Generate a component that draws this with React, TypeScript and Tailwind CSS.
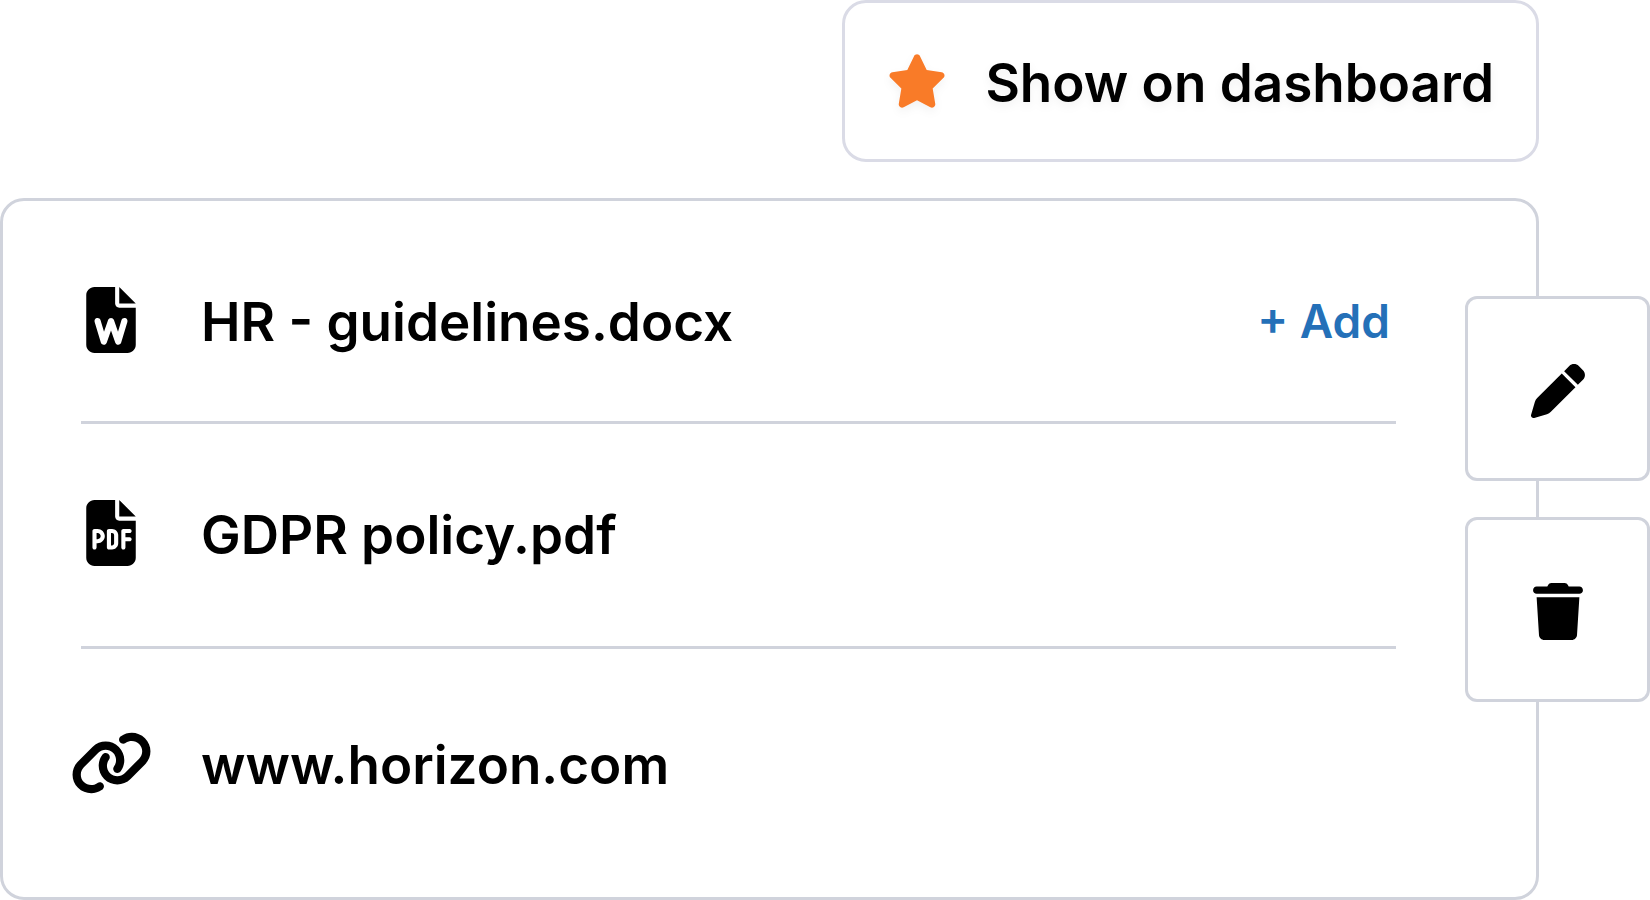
import type { ReactNode } from "react";
import { FaFileWord, FaLink, FaPen, FaStar, FaTrash } from "react-icons/fa6";

function FilePdfIcon({ className }: { className?: string }) {
  return (
    <svg className={className} viewBox="0 0 384 512" fill="currentColor" aria-hidden="true">
      <path d="M88 304H80V256H88C101.3 256 112 266.7 112 280C112 293.3 101.3 304 88 304zM192 256H200C208.8 256 216 263.2 216 272V336C216 344.8 208.8 352 200 352H192V256zM224 0V128C224 145.7 238.3 160 256 160H384V448C384 483.3 355.3 512 320 512H64C28.65 512 0 483.3 0 448V64C0 28.65 28.65 0 64 0H224zM64 224C55.16 224 48 231.2 48 240V368C48 376.8 55.16 384 64 384C72.84 384 80 376.8 80 368V336H88C118.9 336 144 310.9 144 280C144 249.1 118.9 224 88 224H64zM160 368C160 376.8 167.2 384 176 384H200C226.5 384 248 362.5 248 336V272C248 245.5 226.5 224 200 224H176C167.2 224 160 231.2 160 240V368zM288 224C279.2 224 272 231.2 272 240V368C272 376.8 279.2 384 288 384C296.8 384 304 376.8 304 368V320H336C344.8 320 352 312.8 352 304C352 295.2 344.8 288 336 288H304V256H336C344.8 256 352 248.8 352 240C352 231.2 344.8 224 336 224H288zM256 0L384 128H256V0z" />
    </svg>
  );
}

interface ResourceProps {
  icon: ReactNode;
  label: string;
  className: string;
  children?: ReactNode;
}

function Resource({ icon, label, className, children }: ResourceProps) {
  return (
    <li className={`flex items-center justify-between border-[#d0d3dc] ${className}`}>
      <a href="#" className="flex items-center gap-[60px]">
        <span className="flex w-[60px] justify-center">{icon}</span>
        <span className="pt-1 text-[53px] leading-[64px]">{label}</span>
      </a>
      {children}
    </li>
  );
}

function ActionButton({ label, children }: { label: string; children: ReactNode }) {
  return (
    <button
      type="button"
      aria-label={label}
      className="flex size-[185px] items-center justify-center rounded-xl border-3 border-[#d0d3dc] bg-white pt-1"
    >
      {children}
    </button>
  );
}

export default function App() {
  return (
    <main className="flex min-h-screen flex-col gap-9 bg-white font-['Inter',sans-serif] font-semibold text-black">
      <button
        type="button"
        className="mr-[111px] flex h-[162px] items-center gap-[38px] self-end rounded-3xl border-3 border-[#dadbe6] bg-white px-[42px] text-[53px] leading-[64px]"
      >
        <FaStar
          className="h-[54px] w-[60px] text-[#f97b28] drop-shadow-[0_4px_4px_rgba(0,0,0,0.05)]"
          aria-hidden="true"
        />
        <span className="pt-1 drop-shadow-[0_4px_4px_rgba(0,0,0,0.05)]">Show on dashboard</span>
      </button>

      <section className="relative flex flex-1 flex-col pr-[111px]">
        <ul className="flex-1 rounded-3xl border-3 border-[#d0d3dc] pt-[18px] pr-[140px] pl-[78px]">
          <Resource
            icon={<FaFileWord className="h-[66px] w-[50px] shrink-0" aria-hidden="true" />}
            label="HR - guidelines.docx"
            className="h-[205px] border-b-3"
          >
            <button type="button" className="pt-0.5 pr-1.5 text-[46px] leading-[64px] text-[#2470b8]">
              + Add
            </button>
          </Resource>
          <Resource
            icon={<FilePdfIcon className="h-[66px] w-[50px] shrink-0" />}
            label="GDPR policy.pdf"
            className="h-[225px] border-b-3 pb-1"
          />
          <Resource
            icon={<FaLink className="h-[66px] w-[83px] shrink-0" aria-hidden="true" />}
            label="www.horizon.com"
            className="h-[228px]"
          />
        </ul>

        <div className="absolute top-[98px] right-0 flex flex-col gap-9">
          <ActionButton label="Edit">
            <FaPen className="size-[54px]" aria-hidden="true" />
          </ActionButton>
          <ActionButton label="Delete">
            <FaTrash className="h-[57px] w-[50px]" aria-hidden="true" />
          </ActionButton>
        </div>
      </section>
    </main>
  );
}
